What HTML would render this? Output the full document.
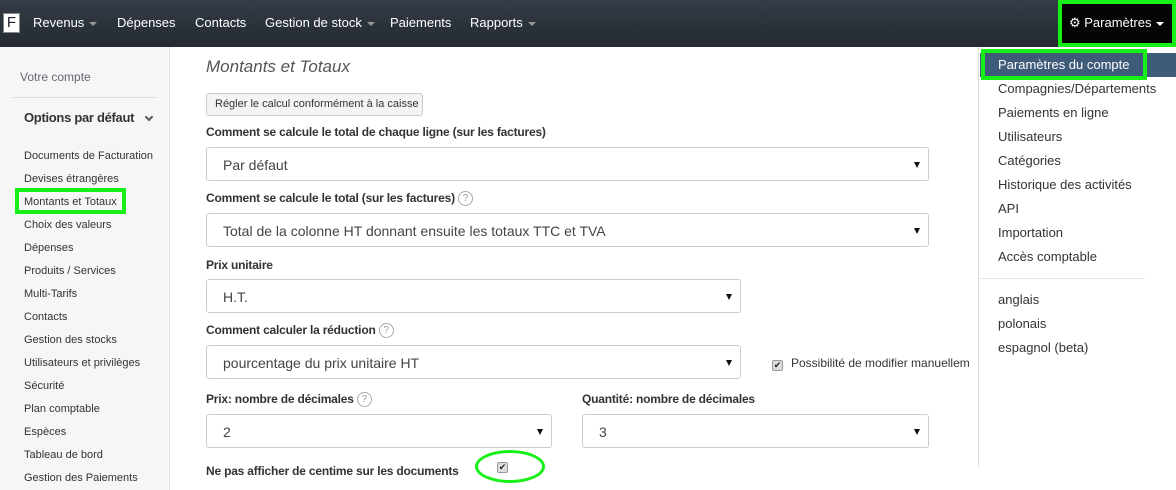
<!DOCTYPE html>
<html><head><meta charset="utf-8"><style>
*{margin:0;padding:0;box-sizing:border-box}
body{width:1176px;height:490px;overflow:hidden;background:#fff;font-family:"Liberation Sans",sans-serif;position:relative;color:#333}
.a{position:absolute;white-space:nowrap}
.nav{position:absolute;left:0;top:0;width:1176px;height:47px;background:linear-gradient(#343c46,#242a31)}
.nav .a{color:#fff;font-size:13px;top:15px}
.car{display:inline-block;border-left:4px solid transparent;border-right:4px solid transparent;border-top:4px solid #999;vertical-align:middle;margin-left:5px}
.side{position:absolute;left:0;top:47px;width:170px;height:443px;background:#f6f6f6;border-right:1px solid #e4e4e4}
.side .i{position:absolute;left:24px;font-size:11px;color:#333}
.lab{position:absolute;font-size:12px;font-weight:bold;color:#333;letter-spacing:-0.2px}
.sel{position:absolute;height:34px;border:1px solid #ccc;border-radius:3px;background:#fff;font-size:14px;color:#444;padding:9px 0 0 16px}
.sel:after{content:"";position:absolute;right:8px;top:14px;border-left:3px solid transparent;border-right:3px solid transparent;border-top:6px solid #111}
.q{display:inline-block;width:15px;height:15px;border:1px solid #aaa;border-radius:50%;font-size:10px;color:#999;text-align:center;line-height:13px;font-weight:normal;vertical-align:middle;margin-left:3px}
.cb{position:absolute;width:11px;height:11px;border:1px solid #999;border-radius:2px;background:#ddd;font-size:9px;line-height:9px;text-align:center;color:#222}
.dd{position:absolute;left:978px;top:47px;width:198px;height:420px;background:#fff;border-left:1px solid #ddd}
.dd .i{position:absolute;left:19px;font-size:13px;color:#333}
</style></head><body>
<div class="nav">
<div class="a" style="left:3px;top:13px;width:17px;height:20px;background:#fff;border:1px solid #888;color:#223;font-size:15px;text-align:center;line-height:18px">F</div>
<div class="a" style="left:33px">Revenus<span class="car"></span></div>
<div class="a" style="left:117px">Dépenses</div>
<div class="a" style="left:195px">Contacts</div>
<div class="a" style="left:265px">Gestion de stock<span class="car"></span></div>
<div class="a" style="left:390px">Paiements</div>
<div class="a" style="left:470px">Rapports<span class="car"></span></div>
<div style="position:absolute;left:1058px;top:0;width:118px;height:47px;background:#050505;border:4px solid #16f016"></div>
<div class="a" style="left:1069px;font-size:13px">⚙ Paramètres<span class="car" style="border-top-color:#fff"></span></div>
</div>
<div class="side">
<div class="i" style="left:20px;top:23px;font-size:12px;color:#667">Votre compte</div>
<div style="position:absolute;left:12px;top:50px;width:145px;border-top:1px solid #ddd"></div>
<div class="i" style="top:63px;font-size:13px;font-weight:bold;letter-spacing:-0.3px">Options par défaut</div>
<div style="position:absolute;left:146px;top:67px;width:6px;height:6px;border-right:2px solid #555;border-bottom:2px solid #555;transform:rotate(45deg)"></div>
<div class="i" style="top:103px">Documents de Facturation</div>
<div class="i" style="top:126px">Devises étrangères</div>
<div style="position:absolute;left:15px;top:141px;width:111px;height:26px;border:4px solid #16f016"></div>
<div class="i" style="top:149px">Montants et Totaux</div>
<div class="i" style="top:172px">Choix des valeurs</div>
<div class="i" style="top:195px">Dépenses</div>
<div class="i" style="top:218px">Produits / Services</div>
<div class="i" style="top:241px">Multi-Tarifs</div>
<div class="i" style="top:264px">Contacts</div>
<div class="i" style="top:287px">Gestion des stocks</div>
<div class="i" style="top:310px">Utilisateurs et privilèges</div>
<div class="i" style="top:333px">Sécurité</div>
<div class="i" style="top:356px">Plan comptable</div>
<div class="i" style="top:379px">Espèces</div>
<div class="i" style="top:402px">Tableau de bord</div>
<div class="i" style="top:425px">Gestion des Paiements</div>
</div>
<div class="a" style="left:206px;top:57px;font-size:17px;font-style:italic;color:#555">Montants et Totaux</div>
<div class="a" style="left:206px;top:93px;width:217px;height:23px;border:1px solid #ccc;border-radius:3px;background:#f4f4f4;font-size:11px;padding:4px 0 0 8px;color:#333">Régler le calcul conformément à la caisse</div>
<div class="lab" style="left:206px;top:125px">Comment se calcule le total de chaque ligne (sur les factures)</div>
<div class="sel" style="left:206px;top:147px;width:723px">Par défaut</div>
<div class="lab" style="left:206px;top:191px">Comment se calcule le total (sur les factures)<span class="q">?</span></div>
<div class="sel" style="left:206px;top:213px;width:723px">Total de la colonne HT donnant ensuite les totaux TTC et TVA</div>
<div class="lab" style="left:206px;top:258px">Prix unitaire</div>
<div class="sel" style="left:206px;top:279px;width:535px">H.T.</div>
<div class="lab" style="left:206px;top:323px">Comment calculer la réduction<span class="q">?</span></div>
<div class="sel" style="left:206px;top:345px;width:535px">pourcentage du prix unitaire HT</div>
<div class="cb" style="left:772px;top:360px">✔</div>
<div class="a" style="left:791px;top:356px;font-size:12px">Possibilité de modifier manuellem</div>
<div class="lab" style="left:206px;top:392px">Prix: nombre de décimales<span class="q">?</span></div>
<div class="lab" style="left:582px;top:392px">Quantité: nombre de décimales</div>
<div class="sel" style="left:206px;top:414px;width:346px">2</div>
<div class="sel" style="left:582px;top:414px;width:347px">3</div>
<div class="lab" style="left:206px;top:464px">Ne pas afficher de centime sur les documents</div>
<div class="cb" style="left:497px;top:462px">✔</div>
<div style="position:absolute;left:475px;top:450px;width:70px;height:33px;border:3px solid #16f016;border-radius:50%"></div>
<div class="dd">
<div style="position:absolute;left:1px;top:6px;width:197px;height:24px;background:#3e5b7a"></div>
<div style="position:absolute;left:2px;top:2px;width:166px;height:31px;border:4px solid #16f016"></div>
<div class="i" style="top:10px;color:#fff">Paramètres du compte</div>
<div class="i" style="top:34px">Compagnies/Départements</div>
<div class="i" style="top:58px">Paiements en ligne</div>
<div class="i" style="top:82px">Utilisateurs</div>
<div class="i" style="top:106px">Catégories</div>
<div class="i" style="top:130px">Historique des activités</div>
<div class="i" style="top:154px">API</div>
<div class="i" style="top:178px">Importation</div>
<div class="i" style="top:202px">Accès comptable</div>
<div style="position:absolute;left:0;top:231px;width:166px;border-top:1px solid #e5e5e5"></div>
<div class="i" style="top:245px">anglais</div>
<div class="i" style="top:269px">polonais</div>
<div class="i" style="top:293px">espagnol (beta)</div>
</div>
</body></html>
